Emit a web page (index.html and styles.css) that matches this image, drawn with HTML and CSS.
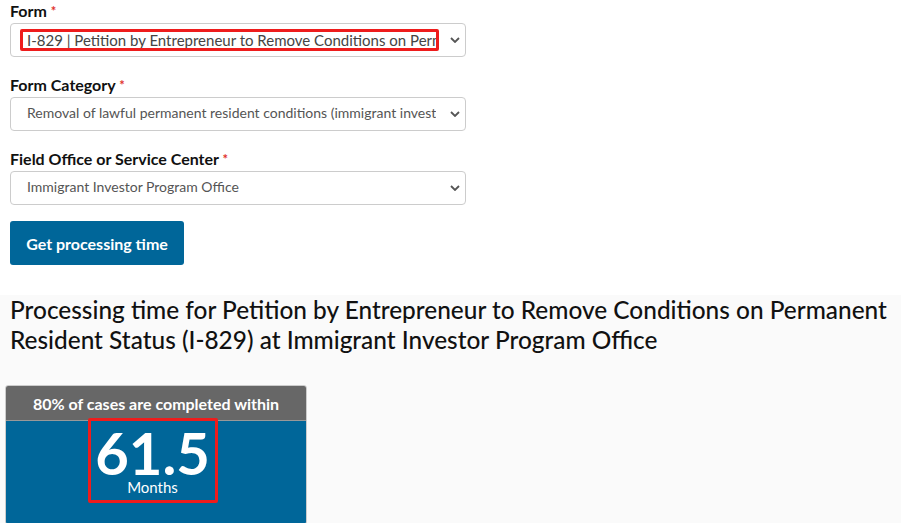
FILE: index.html
```html
<!DOCTYPE html>
<html lang="en">
<head>
<meta charset="UTF-8" />
<meta name="viewport" content="width=device-width, initial-scale=1" />
<title>Case Processing Times</title>
<link rel="stylesheet" href="styles.css">
</head>
<body>

<form class="lookup">
  <div class="field">
    <label for="form">Form <span class="req">*</span></label>
    <div class="select">
      <span class="value marked">I-829 | Petition by Entrepreneur to Remove Conditions on Permanent Resident Status</span>
      <svg class="chev" viewBox="0 0 10 6" width="10" height="6"><path d="M1 1l4 4 4-4" fill="none" stroke="#555" stroke-width="1.8"/></svg>
    </div>
  </div>

  <div class="field">
    <label for="category">Form Category <span class="req">*</span></label>
    <div class="select">
      <span class="value">Removal of lawful permanent resident conditions (immigrant investors)</span>
      <svg class="chev" viewBox="0 0 10 6" width="10" height="6"><path d="M1 1l4 4 4-4" fill="none" stroke="#555" stroke-width="1.8"/></svg>
    </div>
  </div>

  <div class="field">
    <label for="office">Field Office or Service Center <span class="req">*</span></label>
    <div class="select">
      <span class="value">Immigrant Investor Program Office</span>
      <svg class="chev" viewBox="0 0 10 6" width="10" height="6"><path d="M1 1l4 4 4-4" fill="none" stroke="#555" stroke-width="1.8"/></svg>
    </div>
  </div>

  <button type="button" class="btn">Get processing time</button>
</form>

<section class="result">
  <h2>Processing time for Petition by Entrepreneur to Remove Conditions on Permanent Resident Status (I-829) at Immigrant Investor Program Office</h2>

  <div class="card">
    <div class="card-head">80% of cases are completed within</div>
    <div class="card-body">
      <div class="figure">
        <div class="num">61.5</div>
        <div class="unit">Months</div>
      </div>
    </div>
  </div>
</section>

</body>
</html>
```

FILE: styles.css
```css
* {
  box-sizing: border-box;
}
body {
  margin: 0;
  font-family: Lato, "Liberation Sans", sans-serif;
  color: #111;
  background: #fff;
}
.lookup {
  padding: 2px 10px 0;
  width: 476px;
}
.field {
  margin-bottom: 19px;
}
label {
  display: block;
  font-weight: 700;
  font-size: 16px;
  line-height: 18px;
  margin-bottom: 3px;
  color: #111;
}
.req {
  color: #e0312b;
  font-size: 13px;
  vertical-align: top;
}
.select {
  height: 34px;
  border: 1px solid #ccc;
  border-radius: 4px;
  display: flex;
  align-items: center;
  padding: 0 5px 0 10px;
  background: #fff;
}
.value {
  flex: 1;
  overflow: hidden;
  white-space: nowrap;
  font-size: 14px;
  color: #555;
  padding-left: 6px;
  height: 22px;
  line-height: 20px;
  margin-right: 14px;
}
.value.marked {
  border: 3px solid #ee1c1c;
  border-radius: 2px;
  margin-left: -1px;
  padding-left: 4px;
  line-height: 17px;
  margin-right: 11px;
  font-size: 15px;
  color: #444;
}
.chev {
  flex: none;
}
.btn {
  margin-top: -3px;
  width: 174px;
  height: 44px;
  border: none;
  border-radius: 3px;
  background: #006699;
  color: #fff;
  font-family: inherit;
  font-weight: 700;
  font-size: 16px;
  cursor: pointer;
}

.result {
  margin-top: 30px;
  background: #fafafa;
  padding: 0 10px 1px 5px;
  min-height: 240px;
}
.result h2 {
  margin: 0 0 30px 5px;
  font-size: 24.4px;
  line-height: 30px;
  font-weight: 500;
  color: #111;
}
.card {
  width: 302px;
  border-radius: 3px;
  overflow: hidden;
  border: 1px solid #ccc;
}
.card-head {
  background: #676767;
  color: #fff;
  font-weight: 700;
  font-size: 16px;
  height: 35px;
  line-height: 35px;
  text-align: center;
  border-bottom: 1px solid #999;
}
.card-body {
  background: #006699;
  height: 103px;
  display: flex;
  justify-content: center;
  align-items: flex-start;
}
.figure {
  width: 130px;
  height: 85px;
  margin-top: -3px;
  margin-left: -7px;
  border: 3px solid #ee1c1c;
  border-radius: 2px;
  color: #fff;
  text-align: center;
}
.num {
  font-size: 58px;
  font-weight: 700;
  line-height: 52px;
  margin-top: 6px;
}
.unit {
  font-size: 15px;
  line-height: 16px;
}
```
